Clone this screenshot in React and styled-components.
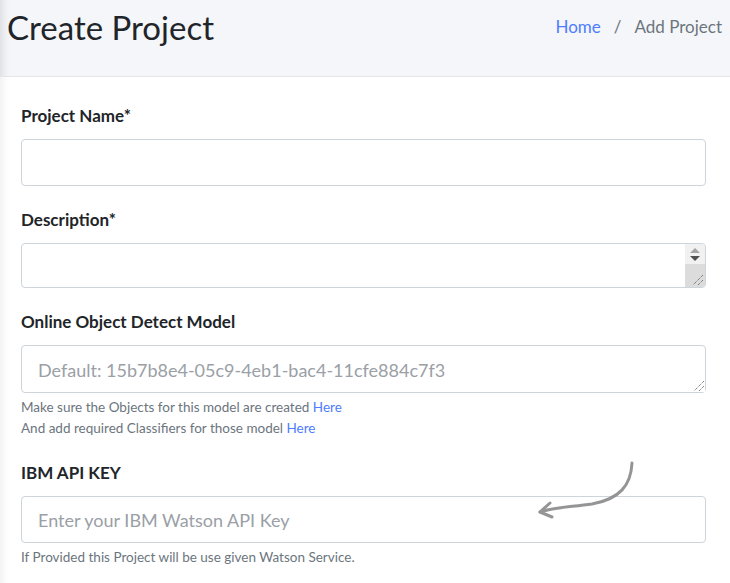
import * as React from "react";
import styled, { createGlobalStyle } from "styled-components";

const GlobalStyle = createGlobalStyle`
  html, body {
    margin: 0;
    padding: 0;
    background: #f4f6f9;
    font-family: Lato, "Liberation Sans", sans-serif;
    color: #212529;
  }
  * { box-sizing: border-box; }
`;

const grip =
  "data:image/svg+xml;utf8,<svg xmlns='http://www.w3.org/2000/svg' width='14' height='14'><g stroke='%23555' stroke-width='1' stroke-dasharray='1 1'><path d='M13 3 L3 13'/><path d='M13 8 L8 13'/></g></svg>";

const Page = styled.div`
  position: relative;
  min-height: 583px;
  overflow: hidden;
  box-shadow: inset 10px 0 10px -8px rgba(0, 0, 0, 0.12);
`;

const Header = styled.div`
  height: 76px;
  display: flex;
  justify-content: space-between;
  align-items: flex-start;
  padding: 5px 8px 0 7px;
`;

const Title = styled.h1`
  margin: 0;
  font-size: 33px;
  font-weight: 400;
  line-height: 44px;
  color: #212529;
`;

const Crumbs = styled.ol`
  list-style: none;
  margin: 0;
  padding: 10px 0 0;
  display: flex;
  gap: 13px;
  font-size: 17px;
  line-height: 24px;
  color: #6c757d;
`;

const Crumb = styled.li`
  color: ${(p) => (p.$active ? "#6c757d" : "#4d7cfe")};
`;

const Card = styled.div`
  background: #fff;
  border-top: 1px solid #e3e5e8;
  box-shadow: inset 10px 0 10px -8px rgba(0, 0, 0, 0.08);
  padding: 27px 24px 20px 21px;
  display: flex;
  flex-direction: column;
  min-height: 507px;
`;

const Group = styled.div`
  display: flex;
  flex-direction: column;
  margin-bottom: 22px;
`;

const Label = styled.label`
  font-weight: 700;
  font-size: 17px;
  line-height: 24px;
  margin-bottom: 11px;
`;

const fieldCss = `
  width: 100%;
  border: 1px solid #ced4da;
  border-radius: 4px;
  background: #fff;
  font-family: Lato, "Liberation Sans", sans-serif;
  font-size: 18px;
  color: #495057;
  padding: 0 16px;
  outline: none;
  &::placeholder { color: #9aa0a6; }
`;

const Input = styled.input`
  ${fieldCss}
  height: 47px;
`;

const Area = styled.textarea`
  ${fieldCss}
  display: block;
  height: ${(p) => p.$h}px;
  padding-top: 11px;
  line-height: 26px;
  resize: ${(p) => (p.$scroll ? "none" : "vertical")};
  overflow: hidden;

  &::-webkit-resizer {
    background: #fff url("${grip}") right bottom no-repeat;
  }
`;

const AreaWrap = styled.div`
  position: relative;
`;

const Gutter = styled.div`
  position: absolute;
  top: 1px;
  right: 1px;
  bottom: 1px;
  width: 20px;
  display: flex;
  flex-direction: column;
  border-radius: 0 3px 3px 0;
  overflow: hidden;
`;

const Buttons = styled.div`
  height: 20px;
  background: #f1f1f1;
  display: flex;
  flex-direction: column;
  align-items: center;
  justify-content: center;
  gap: 3px;
`;

const Tri = styled.span`
  width: 0;
  height: 0;
  border-left: 5px solid transparent;
  border-right: 5px solid transparent;
  ${(p) =>
    p.$up
      ? "border-bottom: 5px solid #a3a3a3;"
      : "border-top: 5px solid #505050;"}
`;

const Resizer = styled.div`
  flex: 1;
  background: #dcdcdc url("${grip}") right 1px bottom 1px no-repeat;
`;

const Help = styled.small`
  display: block;
  font-size: 13.5px;
  line-height: 21px;
  color: #6c757d;
  margin-top: ${(p) => p.$mt || 0}px;
`;

const Link = styled.a`
  color: #4d7cfe;
  text-decoration: none;
`;

const ArrowMark = styled.svg`
  position: absolute;
  left: 530px;
  top: 455px;
  width: 110px;
  height: 66px;
  pointer-events: none;
`;

export default function App() {
  return (
    <Page>
      <GlobalStyle />
      <Header>
        <Title>Create Project</Title>
        <Crumbs>
          <Crumb>Home</Crumb>
          <li>/</li>
          <Crumb $active>Add Project</Crumb>
        </Crumbs>
      </Header>
      <Card>
        <Group>
          <Label>Project Name*</Label>
          <Input />
        </Group>
        <Group>
          <Label>Description*</Label>
          <AreaWrap>
            <Area $h={45} $scroll />
            <Gutter>
              <Buttons>
                <Tri $up />
                <Tri />
              </Buttons>
              <Resizer />
            </Gutter>
          </AreaWrap>
        </Group>
        <Group>
          <Label>Online Object Detect Model</Label>
          <Area $h={48} placeholder="Default: 15b7b8e4-05c9-4eb1-bac4-11cfe884c7f3" />
          <Help $mt={4}>
            Make sure the Objects for this model are created <Link href="#">Here</Link>
          </Help>
          <Help>
            And add required Classifiers for those model <Link href="#">Here</Link>
          </Help>
        </Group>
        <Group>
          <Label>IBM API KEY</Label>
          <Input placeholder="Enter your IBM Watson API Key" />
          <Help $mt={4}>If Provided this Project will be use given Watson Service.</Help>
        </Group>
      </Card>
      <ArrowMark viewBox="0 0 110 66">
        <g fill="none" stroke="#8a8a8a" strokeWidth="3" strokeLinecap="round" strokeLinejoin="round" opacity="0.9">
          <path d="M102 8 C101 30 90 44 62 49 C42 52 24 52 10 57" />
          <path d="M20 48 L10 57 L22 62" />
        </g>
      </ArrowMark>
    </Page>
  );
}
